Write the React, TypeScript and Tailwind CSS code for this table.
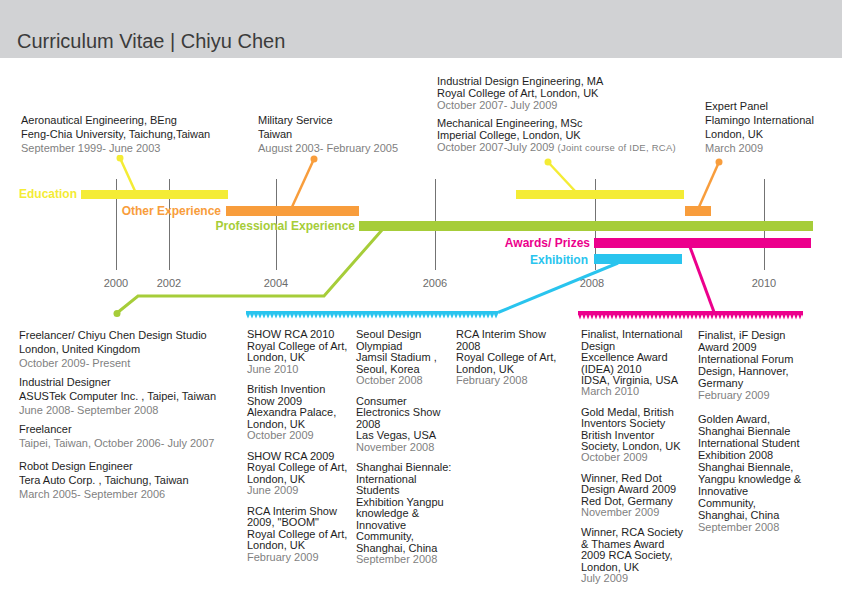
type Item = { lines: string[]; date: string; note?: string };

const YELLOW = '#f4ec35';
const ORANGE = '#f89d3c';
const GREEN = '#a6cd39';
const PINK = '#ec008c';
const BLUE = '#29c4ee';

const career: Item[] = [
  { lines: ['Freelancer/ Chiyu Chen Design Studio', 'London, United Kingdom'], date: 'October 2009- Present' },
  { lines: ['Industrial Designer', 'ASUSTek Computer Inc. , Taipei, Taiwan'], date: 'June 2008- September 2008' },
  { lines: ['Freelancer'], date: 'Taipei, Taiwan, October 2006- July 2007' },
  { lines: ['Robot Design Engineer', 'Tera Auto Corp. , Taichung, Taiwan'], date: 'March 2005- September 2006' },
];

const showsA: Item[] = [
  { lines: ['SHOW RCA 2010', 'Royal College of Art,', 'London, UK'], date: 'June 2010' },
  { lines: ['British Invention', 'Show 2009', 'Alexandra Palace,', 'London, UK'], date: 'October 2009' },
  { lines: ['SHOW RCA 2009', 'Royal College of Art,', 'London, UK'], date: 'June 2009' },
  { lines: ['RCA Interim Show', '2009, "BOOM"', 'Royal College of Art,', 'London, UK'], date: 'February 2009' },
];

const showsB: Item[] = [
  { lines: ['Seoul Design', 'Olympiad', 'Jamsil Stadium ,', 'Seoul, Korea'], date: 'October 2008' },
  { lines: ['Consumer', 'Electronics Show', '2008', 'Las Vegas, USA'], date: 'November 2008' },
  {
    lines: ['Shanghai Biennale:', 'International', 'Students', 'Exhibition Yangpu', 'knowledge &', 'Innovative', 'Community,', 'Shanghai, China'],
    date: 'September 2008',
  },
];

const showsC: Item[] = [
  { lines: ['RCA Interim Show', '2008', 'Royal College of Art,', 'London, UK'], date: 'February 2008' },
];

const awardsA: Item[] = [
  { lines: ['Finalist, International', 'Design', 'Excellence Award', '(IDEA) 2010', 'IDSA, Virginia, USA'], date: 'March 2010' },
  { lines: ['Gold Medal, British', 'Inventors Society', 'British Inventor', 'Society, London, UK'], date: 'October 2009' },
  { lines: ['Winner, Red Dot', 'Design Award 2009', 'Red Dot, Germany'], date: 'November 2009' },
  { lines: ['Winner, RCA Society', '& Thames Award', '2009 RCA Society,', 'London, UK'], date: 'July 2009' },
];

const awardsB: Item[] = [
  { lines: ['Finalist, iF Design', 'Award 2009', 'International Forum', 'Design, Hannover,', 'Germany'], date: 'February 2009' },
  {
    lines: ['Golden Award,', 'Shanghai Biennale', 'International Student', 'Exhibition 2008', 'Shanghai Biennale,', 'Yangpu knowledge &', 'Innovative', 'Community,', 'Shanghai, China'],
    date: 'September 2008',
  },
];

function Entry({ item, className }: { item: Item; className?: string }) {
  return (
    <div className={className}>
      {item.lines.map((l, i) => (
        <div key={i} className="whitespace-nowrap">
          {l}
        </div>
      ))}
      <div className="whitespace-nowrap text-[#7f7f7f]">
        {item.date}
        {item.note && <span className="text-[9.5px] tracking-[0.25px]">{item.note}</span>}
      </div>
    </div>
  );
}

const years = [
  { x: 116, label: '2000', lx: 116 },
  { x: 169, label: '2002', lx: 169 },
  { x: 276, label: '2004', lx: 276 },
  { x: 435, label: '2006', lx: 435 },
  { x: 595, label: '2008', lx: 592 },
  { x: 764, label: '2010', lx: 764 },
];

function Timeline() {
  const font = { fontFamily: '"Liberation Sans", Arial, sans-serif' };
  return (
    <svg width="842" height="170" viewBox="0 155 842 170" className="block">
      <defs>
        <pattern id="zzBlue" x="246" y="313" width="4" height="6" patternUnits="userSpaceOnUse">
          <polygon points="-0.5,0 4.5,0 2,5.5" fill={BLUE} />
        </pattern>
        <pattern id="zzPink" x="578" y="313" width="4" height="7" patternUnits="userSpaceOnUse">
          <polygon points="-0.5,0 4.5,0 2,6.5" fill={PINK} />
        </pattern>
      </defs>

      {years.map((y) => (
        <g key={y.label}>
          <line x1={y.x + 0.5} y1="179" x2={y.x + 0.5} y2="270" stroke="#737373" strokeWidth="1" />
          <text x={y.lx} y="287" fontSize="11" fill="#6b6b6b" textAnchor="middle" style={font}>
            {y.label}
          </text>
        </g>
      ))}

      {/* connectors */}
      <line x1="120" y1="158" x2="135" y2="191" stroke={YELLOW} strokeWidth="2.5" />
      <circle cx="120" cy="158" r="3.5" fill={YELLOW} />
      <line x1="548" y1="162" x2="575" y2="191" stroke={YELLOW} strokeWidth="2.5" />
      <circle cx="548" cy="162" r="3.5" fill={YELLOW} />
      <line x1="314" y1="159" x2="292" y2="207" stroke={ORANGE} strokeWidth="2.5" />
      <circle cx="314" cy="159" r="3.5" fill={ORANGE} />
      <line x1="719" y1="162" x2="699" y2="207" stroke={ORANGE} strokeWidth="2.5" />
      <circle cx="719" cy="162" r="3.5" fill={ORANGE} />
      <polyline points="382,230 324,296 138,296 117,313" fill="none" stroke={GREEN} strokeWidth="3" />
      <circle cx="117" cy="313.5" r="3.5" fill={GREEN} />
      <line x1="618" y1="263" x2="498" y2="312.5" stroke={BLUE} strokeWidth="3" />
      <line x1="690" y1="247" x2="714" y2="312" stroke={PINK} strokeWidth="3" />

      {/* bars */}
      <rect x="81" y="190" width="147" height="9" fill={YELLOW} />
      <rect x="516" y="190" width="168" height="9" fill={YELLOW} />
      <rect x="226" y="206" width="133" height="10" fill={ORANGE} />
      <rect x="685" y="206" width="26" height="10" fill={ORANGE} />
      <rect x="359" y="221" width="454" height="10" fill={GREEN} />
      <rect x="594" y="238" width="217" height="10" fill={PINK} />
      <rect x="594" y="254" width="88" height="10" fill={BLUE} />

      {/* labels */}
      <g fontSize="12" fontWeight="bold" textAnchor="end" style={font}>
        <text x="77" y="198" fill={YELLOW}>Education</text>
        <text x="221" y="215" fill={ORANGE}>Other Experience</text>
        <text x="355" y="230" fill={GREEN}>Professional Experience</text>
        <text x="590" y="247" fill={PINK}>Awards/ Prizes</text>
        <text x="588" y="264" fill={BLUE}>Exhibition</text>
      </g>

      {/* zigzag bars */}
      <rect x="246" y="311" width="252" height="2.5" fill={BLUE} />
      <rect x="246" y="313" width="252" height="6" fill="url(#zzBlue)" />
      <rect x="578" y="311" width="225" height="2.5" fill={PINK} />
      <rect x="578" y="313" width="225" height="7" fill="url(#zzPink)" />
    </svg>
  );
}

export default function App() {
  return (
    <div className="w-[842px] h-[596px] overflow-hidden bg-white font-['Liberation_Sans',Arial,sans-serif] text-[11px] text-[#1e1e1e]">
      <header className="h-[58px] bg-[#d1d2d4] pl-[17px] pt-[29px]">
        <h1 className="text-[20px] leading-[24px] text-[#3b3b3b]">Curriculum Vitae | Chiyu Chen</h1>
      </header>

      <section className="flex h-[97px] items-start">
        <div className="ml-[21px] mt-[55px] w-[237px] leading-[14px]">
          <Entry item={{ lines: ['Aeronautical Engineering, BEng', 'Feng-Chia University, Taichung,Taiwan'], date: 'September 1999- June 2003' }} />
        </div>
        <div className="mt-[55px] w-[179px] leading-[14px]">
          <Entry item={{ lines: ['Military Service', 'Taiwan'], date: 'August 2003- February 2005' }} />
        </div>
        <div className="mt-[17px] flex w-[268px] flex-col gap-[6px] leading-[12px]">
          <Entry item={{ lines: ['Industrial Design Engineering, MA', 'Royal College of Art, London, UK'], date: 'October 2007- July 2009' }} />
          <Entry
            item={{ lines: ['Mechanical Engineering, MSc', 'Imperial College, London, UK'], date: 'October 2007-July 2009 ', note: '(Joint course of IDE, RCA)' }}
          />
        </div>
        <div className="mt-[41px] leading-[14px]">
          <Entry item={{ lines: ['Expert Panel', 'Flamingo International', 'London, UK'], date: 'March 2009' }} />
        </div>
      </section>

      <Timeline />

      <section className="flex items-start">
        <div className="ml-[19px] mt-[3px] w-[228px] leading-[14px]">
          <Entry item={career[0]} />
          <Entry item={career[1]} className="mt-[5px]" />
          <Entry item={career[2]} className="mt-[5px]" />
          <Entry item={career[3]} className="mt-[9px]" />
        </div>
        <div className="mt-[4.3px] flex w-[109px] flex-col gap-[9px] leading-[11.5px]">
          {showsA.map((s, i) => (
            <Entry key={i} item={s} />
          ))}
        </div>
        <div className="mt-[4.3px] flex w-[100px] flex-col gap-[9px] leading-[11.5px]">
          {showsB.map((s, i) => (
            <Entry key={i} item={s} />
          ))}
        </div>
        <div className="mt-[4.3px] flex w-[125px] flex-col gap-[9px] leading-[11.5px]">
          {showsC.map((s, i) => (
            <Entry key={i} item={s} />
          ))}
        </div>
        <div className="mt-[4.3px] flex w-[117px] flex-col gap-[9px] leading-[11.4px]">
          {awardsA.map((s, i) => (
            <Entry key={i} item={s} />
          ))}
        </div>
        <div className="mt-[4px] flex flex-1 flex-col gap-[12px] leading-[12px]">
          {awardsB.map((s, i) => (
            <Entry key={i} item={s} />
          ))}
        </div>
      </section>
    </div>
  );
}
